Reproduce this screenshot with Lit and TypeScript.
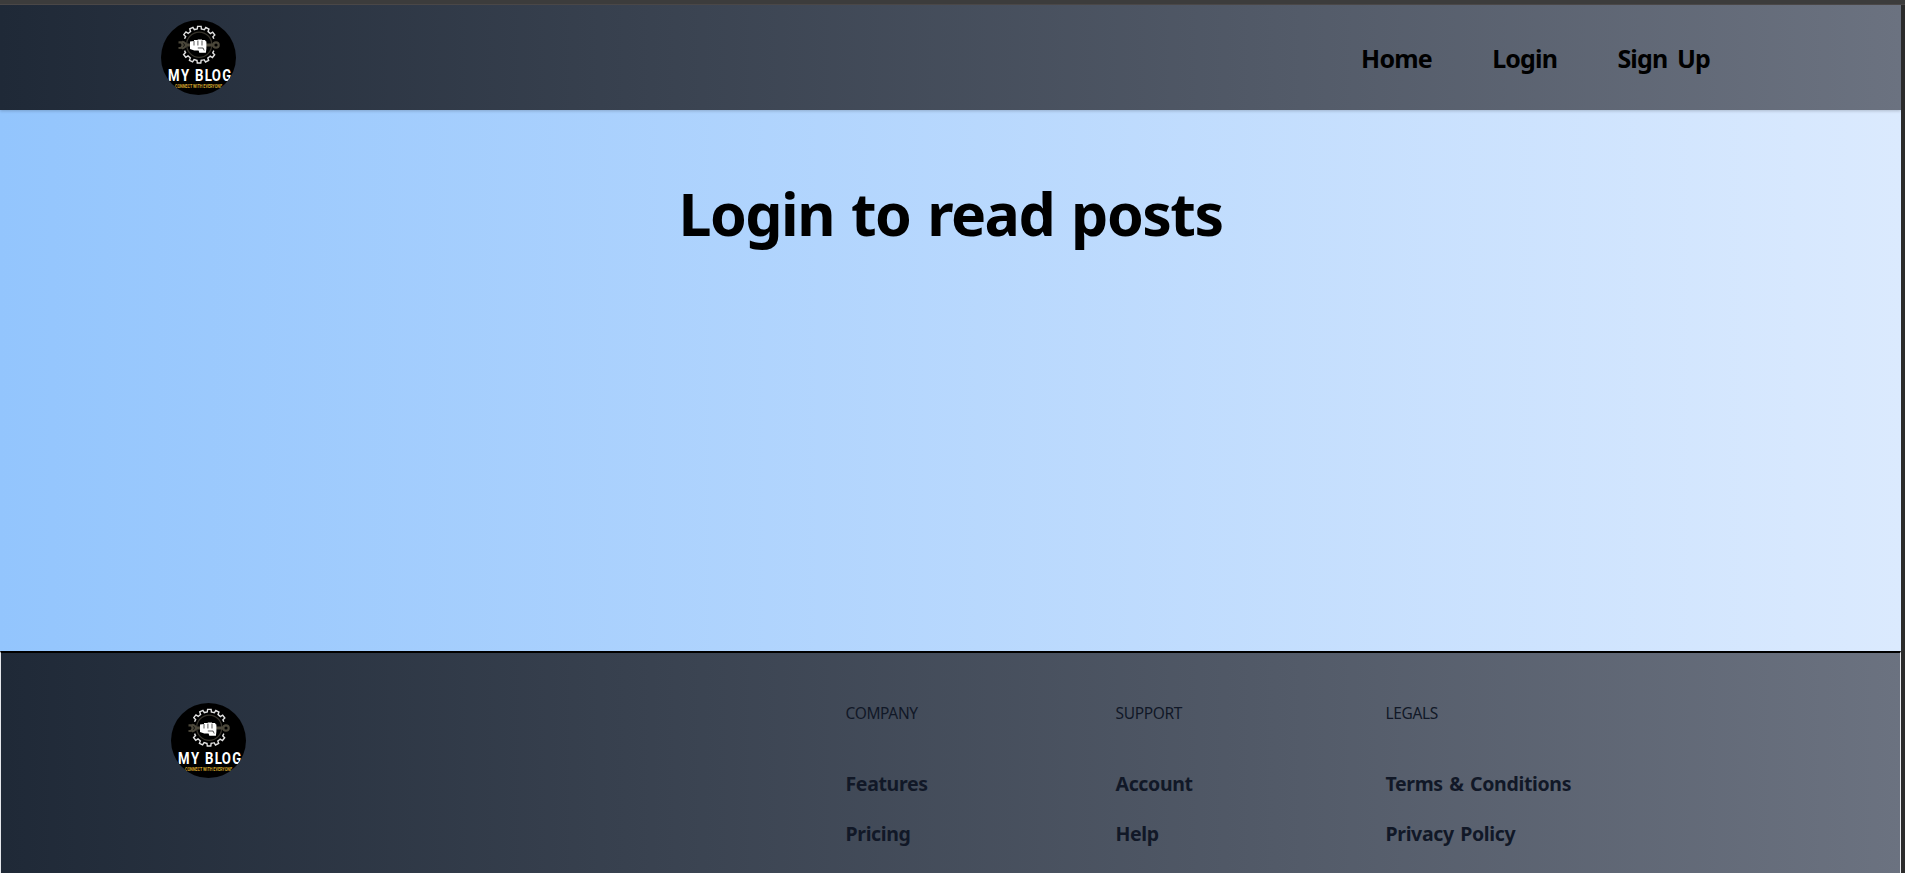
import { LitElement, html, css, svg } from "lit";
import { customElement } from "lit/decorators.js";

const point = (r: number, deg: number) => {
  const a = (deg * Math.PI) / 180;
  return `${(38.2 + r * Math.cos(a)).toFixed(2)} ${(24.7 + r * Math.sin(a)).toFixed(2)}`;
};

/* Toothed arc of the gear between two angles. */
const gearArc = (start: number, teeth: number) => {
  const pts: string[] = [];
  for (let i = 0; i < teeth; i++) {
    const a = start + i * 26;
    pts.push(point(15.8, a), point(15.8, a + 9), point(18.4, a + 11), point(18.4, a + 22), point(15.8, a + 24));
  }
  pts.push(point(15.8, start + teeth * 26 + 6));
  return "M" + pts.join("L");
};

@customElement("blog-logo")
export class BlogLogo extends LitElement {
  static styles = css`
    :host { display: block; width: 75px; height: 75px; }
    svg { display: block; }
    .title { font: 700 16.5px "Roboto", sans-serif; fill: #fff; }
    .tag { font: 700 5.2px "Roboto", sans-serif; fill: #d3a42c; }
  `;
  render() {
    return html`<svg width="75" height="75" viewBox="0 0 75 75">
      ${svg`
      <defs><clipPath id="disc"><circle cx="37.5" cy="37.5" r="37.5"/></clipPath></defs>
      <g clip-path="url(#disc)">
        <rect width="75" height="75" fill="#000"/>
        <circle cx="38.2" cy="24.7" r="12.6" fill="none" stroke="#36332b" stroke-width="1.3"/>
        <g fill="none" stroke="#4b473a">
          <path d="M24 25H53" stroke-width="3.2"/>
          <path d="M17.5 22.3L20.5 22.4L21.8 25L20.5 27.8L17.5 28" stroke-width="2.2"/>
          <path d="M21 21.7Q24.8 22.3 24.8 25T21 28.4" stroke-width="2"/>
          <circle cx="55" cy="25" r="2.7" stroke-width="2.2"/>
        </g>
        <path d=${gearArc(202, 5)} fill="none" stroke="#e2e2e2" stroke-width="1.4"/>
        <path d=${gearArc(22, 5)} fill="none" stroke="#e2e2e2" stroke-width="1.4"/>
        <path d="M29 21.6L33 20.9V19.9H36.7V19.5H41V20.1H44.3V21L45.4 21.5V28.5L44.9 32.8H38.3L37.6 30.4H33.3L29 29Z" fill="#fff"/>
        <path d="M33 21V25.5M36.9 20.6V25.5M41 20.6V25.5M36.8 28H42.2M42 28L43.2 30.5" fill="none" stroke="#111" stroke-width=".7"/>
        <text class="title" transform="scale(.8 1)" y="61.2" x="8.7 25 36 42.5 54.6 63.4 76.7">MY BLOG</text>
        <text class="tag" x="14" y="67.8" textLength="47" lengthAdjust="spacingAndGlyphs">CONNECT WITH EVERYONE</text>
      </g>`}
    </svg>`;
  }
}

const columns = [
  { title: "COMPANY", cls: "company", links: ["Features", "Pricing"] },
  { title: "SUPPORT", cls: "support", links: ["Account", "Help"] },
  { title: "LEGALS", cls: "legals", links: ["Terms & Conditions", "Privacy Policy"] },
];

@customElement("app-root")
export class AppRoot extends LitElement {
  static styles = css`
    * { box-sizing: border-box; }
    :host {
      display: grid;
      grid-template: 5px 868px / 1901px 4px;
      width: 1905px;
      height: 873px;
      overflow: hidden;
      font-family: "Segoe UI", "Noto Sans", sans-serif;
    }
    .frame { grid-column: 1 / 3; background: #3c3c3c; border-bottom: 1px solid #4a4747; }
    .rail { background: #2b2b2b; }
    .page { display: flex; flex-direction: column; height: 868px; overflow: hidden; }
    header {
      height: 105px;
      flex: none;
      display: flex;
      justify-content: space-between;
      padding: 15px 191px 0 161px;
      background: linear-gradient(to right, #1f2937, #6b7280);
      box-shadow: 0 1px 3px rgba(0, 0, 0, .2);
      z-index: 1;
    }
    nav { display: flex; padding-top: 22px; height: 60px; gap: 60.4px; }
    nav a { font-weight: 700; font-size: 25px; line-height: 32px; letter-spacing: -.85px; word-spacing: 4px; color: #000; white-space: nowrap; }
    main {
      height: 541px;
      flex: none;
      display: flex;
      justify-content: center;
      padding-top: 73px;
      background: linear-gradient(to right, #93c5fd, #dbeafe);
    }
    h1 { margin: 0; font-weight: 700; font-size: 59px; line-height: 60px; letter-spacing: -1.5px; word-spacing: 3px; white-space: nowrap; }
    footer {
      height: 222px;
      flex: none;
      display: flex;
      border: 1px solid #e5e7eb;
      border-top: 2px solid #000;
      border-bottom: none;
      padding: 50px 0 0 170px;
      background: linear-gradient(to right, #1f2937, #6b7280);
      color: #111827;
    }
    .links { display: grid; grid-template-columns: 270px 270px 270px; margin-left: 599.5px; }
    h3 { margin: 0 0 49px; font-weight: 400; font-size: 15.5px; line-height: 20px; letter-spacing: -.35px; }
    .links a { display: block; font-weight: 700; font-size: 19.5px; line-height: 24px; letter-spacing: -.35px; word-spacing: 1.8px; margin-bottom: 26px; white-space: nowrap; }
  `;
  render() {
    return html`
      <div class="frame"></div>
      <div class="page">
        <header>
          <blog-logo></blog-logo>
          <nav><a>Home</a><a>Login</a><a>Sign Up</a></nav>
        </header>
        <main><h1>Login to read posts</h1></main>
        <footer>
          <blog-logo></blog-logo>
          <div class="links">
            ${columns.map((c) => html`<section class=${c.cls}>
              <h3>${c.title}</h3>
              ${c.links.map((l) => html`<a>${l}</a>`)}
            </section>`)}
          </div>
        </footer>
      </div>
      <div class="rail"></div>
    `;
  }
}
